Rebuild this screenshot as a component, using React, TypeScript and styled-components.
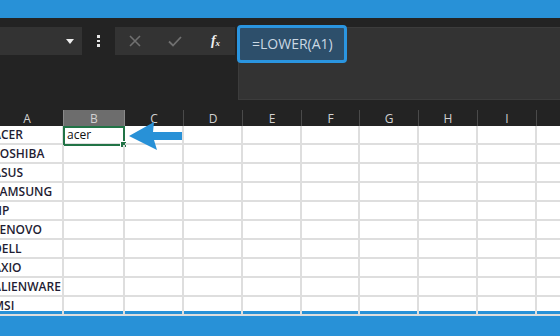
import React from "react";
import styled, { createGlobalStyle } from "styled-components";

const brands = [
  "ACER",
  "TOSHIBA",
  "ASUS",
  "SAMSUNG",
  "HP",
  "LENOVO",
  "DELL",
  "AXIO",
  "ALIENWARE",
  "MSI",
];

const columns = ["A", "B", "C", "D", "E", "F", "G", "H", "I", "J"];
const widths = "73px 61px 59px 59px 59px 58px 59px 59px 59px 80px";

const App = () => {
  return (
    <>
      <GlobalStyle />
      <Screen>
        <BlueBar $h={18} />
        <Toolbar>
          <NameBox>
            <Caret />
          </NameBox>
          <Grip>
            <Dot />
            <Dot />
            <Dot />
          </Grip>
          <ButtonGroup>
            <ToolButton>
              <svg width="12" height="12" viewBox="0 0 12 12">
                <path d="M1 1 L11 11 M11 1 L1 11" stroke="#707070" strokeWidth="1.6" fill="none" />
              </svg>
            </ToolButton>
            <ToolButton>
              <svg width="14" height="11" viewBox="0 0 14 11">
                <path d="M1 5.5 L5 9.5 L13 1" stroke="#707070" strokeWidth="1.8" fill="none" />
              </svg>
            </ToolButton>
            <ToolButton>
              <Fx>
                f<sub>x</sub>
              </Fx>
            </ToolButton>
          </ButtonGroup>
          <FormulaPanel>
            <FormulaBox>=LOWER(A1)</FormulaBox>
          </FormulaPanel>
        </Toolbar>
        <Sheet>
          <HeaderRow>
            {columns.map((c) => (
              <ColHead key={c} $active={c === "B"}>
                {c === "J" ? "" : c}
              </ColHead>
            ))}
          </HeaderRow>
          <Grid>
            {brands.map((b, r) =>
              columns.map((c) => (
                <Cell key={b + c} $bold={c === "A"}>
                  {c === "A" && b}
                  {c === "B" && r === 0 && (
                    <>
                      acer
                      <Selection>
                        <Handle />
                      </Selection>
                    </>
                  )}
                </Cell>
              ))
            )}
            <Arrow width="54" height="30" viewBox="0 0 54 30">
              <polygon
                points="0,15 25,1 24,11 53,11 53,19 25,19 28,29"
                fill="#2891d7"
              />
            </Arrow>
          </Grid>
        </Sheet>
        <BlueBar $h={25} />
      </Screen>
    </>
  );
};

export default App;

const GlobalStyle = createGlobalStyle`
  body {
    margin: 0;
    background: #232323;
  }
`;

const Screen = styled.div`
  width: 560px;
  height: 336px;
  overflow: hidden;
  display: flex;
  flex-direction: column;
  background: #232323;
  font-family: "Open Sans", "Liberation Sans", sans-serif;
`;

const BlueBar = styled.div<{ $h: number }>`
  height: ${(p) => p.$h}px;
  flex: none;
  background: #2891d7;
`;

const Toolbar = styled.div`
  height: 92px;
  flex: none;
  display: flex;
  align-items: flex-start;
  padding-top: 9px;
  box-sizing: border-box;
  background: #232323;
`;

const NameBox = styled.div`
  width: 82px;
  height: 28px;
  flex: none;
  background: #333;
  display: flex;
  align-items: center;
  justify-content: flex-end;
  padding-right: 8px;
  box-sizing: border-box;
`;

const Caret = styled.div`
  width: 0;
  height: 0;
  border-left: 4px solid transparent;
  border-right: 4px solid transparent;
  border-top: 5px solid #eee;
`;

const Grip = styled.div`
  width: 33px;
  height: 28px;
  flex: none;
  display: flex;
  flex-direction: column;
  align-items: center;
  justify-content: center;
  gap: 2px;
`;

const Dot = styled.span`
  width: 2.5px;
  height: 2.5px;
  background: #e6e6e6;
`;

const ButtonGroup = styled.div`
  width: 120px;
  height: 28px;
  flex: none;
  display: flex;
  background: #333;
`;

const ToolButton = styled.div`
  flex: 1;
  display: flex;
  align-items: center;
  justify-content: center;
`;

const Fx = styled.span`
  font-family: "Liberation Serif", serif;
  font-style: italic;
  font-weight: bold;
  font-size: 14px;
  color: #f0f0f0;
  padding-left: 1px;

  sub {
    font-size: 9px;
    vertical-align: -1px;
  }
`;

const FormulaPanel = styled.div`
  flex: 1;
  height: 71px;
  margin-left: 3px;
  position: relative;
  background: #333;
  border: 1px solid #3c3c3c;
  border-right: none;
`;

const FormulaBox = styled.div`
  position: absolute;
  left: -2px;
  top: -3px;
  width: 110px;
  height: 38px;
  box-sizing: border-box;
  border: 3px solid #2a95e0;
  border-radius: 4px;
  background: #2d4f6b;
  color: #cbd8e3;
  font-size: 14px;
  line-height: 32px;
  padding-left: 12px;
  white-space: nowrap;
`;

const Sheet = styled.div`
  flex: none;
  margin-left: -9px;
  display: flex;
  flex-direction: column;
`;

const HeaderRow = styled.div`
  display: grid;
  grid-template-columns: ${widths};
  height: 16px;
  background: #232323;
`;

const ColHead = styled.div<{ $active?: boolean }>`
  display: flex;
  align-items: center;
  justify-content: center;
  font-size: 12px;
  color: #d2d2d2;
  border-right: 1px solid ${(p) => (p.$active ? "#8a8a8a" : "#4a4a4a")};
  border-left: ${(p) => (p.$active ? "1px solid #8a8a8a" : "none")};
  margin-left: ${(p) => (p.$active ? "-1px" : "0")};
  background: ${(p) => (p.$active ? "#6d6d6d" : "transparent")};
`;

const Grid = styled.div`
  position: relative;
  display: grid;
  grid-template-columns: ${widths};
  grid-template-rows: repeat(10, 1fr);
  height: 185px;
  background: #fff;
`;

const Cell = styled.div<{ $bold?: boolean }>`
  position: relative;
  display: flex;
  align-items: center;
  padding-left: ${(p) => (p.$bold ? "2px" : "3px")};
  border-right: 2px solid #dedede;
  border-bottom: 2px solid #dedede;
  font-size: 12px;
  font-weight: ${(p) => (p.$bold ? 600 : 400)};
  color: ${(p) => (p.$bold ? "#1f1d33" : "#111")};
  white-space: nowrap;
  overflow: visible;
`;

const Selection = styled.div`
  position: absolute;
  left: -1px;
  top: 0;
  width: 62px;
  height: 20px;
  box-sizing: border-box;
  border: 2px solid #217346;
`;

const Handle = styled.div`
  position: absolute;
  right: -3px;
  bottom: -3px;
  width: 5px;
  height: 5px;
  background: #217346;
  outline: 1px solid #fff;
`;

const Arrow = styled.svg`
  position: absolute;
  left: 138px;
  top: -5px;
  z-index: 2;
`;
